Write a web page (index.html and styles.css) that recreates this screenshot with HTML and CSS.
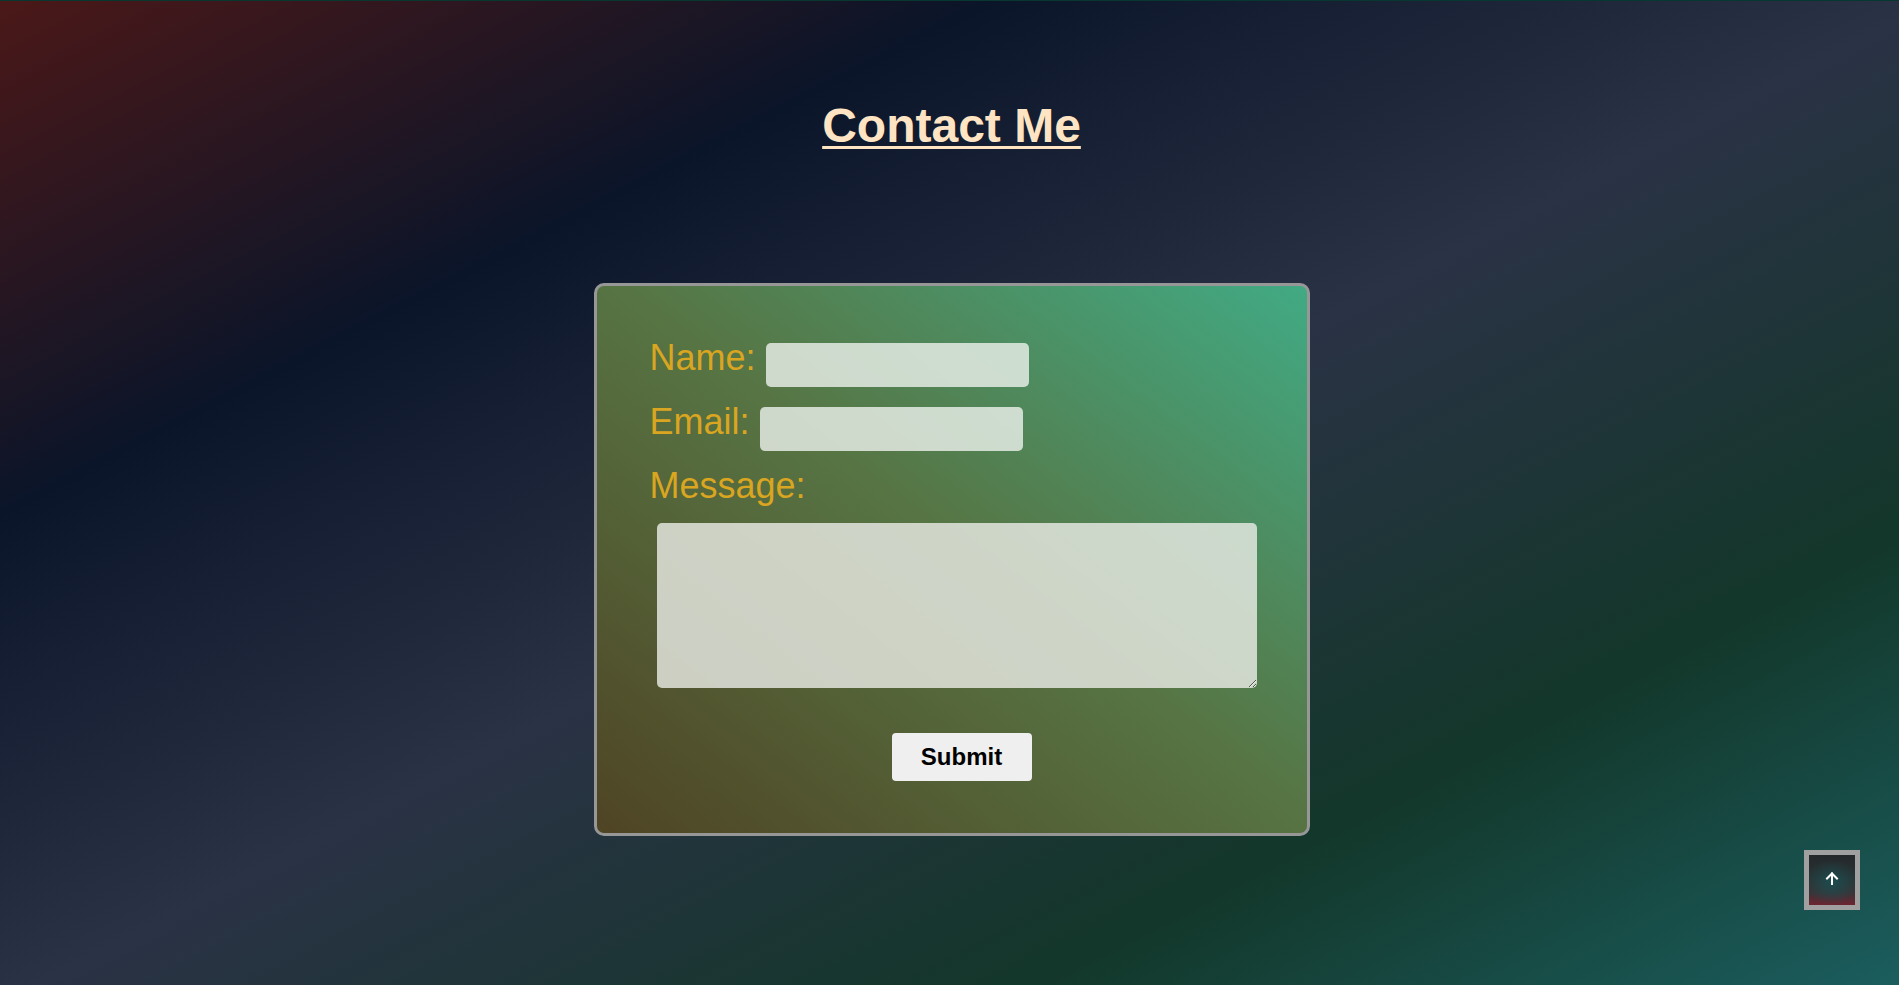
FILE: index.html
```html
<!DOCTYPE html>
<html lang="en">
<head>
<meta charset="utf-8">
<title>Contact Me</title>
<link rel="stylesheet" href="styles.css">
</head>
<body>
  <main class="page">
    <h1 class="title">Contact Me</h1>
    <form class="contact-card">
      <div class="row"><label for="name">Name:</label> <input class="field" type="text" id="name"></div>
      <div class="row"><label for="email">Email:</label> <input class="field" type="email" id="email"></div>
      <div class="row"><label for="message">Message:</label></div>
      <textarea class="message" id="message"></textarea>
      <div class="actions"><button class="submit" type="submit">Submit</button></div>
    </form>
  </main>
  <a class="to-top" href="#" aria-label="Back to top">
    <svg width="14" height="14" viewBox="0 0 14 14" fill="none" stroke="#fff" stroke-width="2" stroke-linecap="square">
      <path d="M7 13V2.5"/>
      <path d="M2 7.5L7 2.5L12 7.5"/>
    </svg>
  </a>
</body>
</html>
```
FILE: styles.css
```css
html, body {
  margin: 0;
  padding: 0;
}

body {
  min-height: 100vh;
  font-family: "Liberation Sans", Arial, sans-serif;
  background: linear-gradient(to bottom right,
    #4b1818 0%,
    #0b1529 26%,
    #2a3245 51%,
    #13372a 77%,
    #1b5d5e 100%);
  box-shadow: inset 0 1px 0 #08372f;
}

.page {
  display: flex;
  flex-direction: column;
  align-items: center;
  padding: 98px 0 0 4px;
}

.title {
  margin: 0;
  font-size: 48px;
  font-weight: bold;
  line-height: 55px;
  color: #ffe4c4;
  text-decoration: underline;
  text-decoration-thickness: 3px;
  text-underline-offset: 4px;
}

.contact-card {
  box-sizing: border-box;
  width: 716px;
  margin-top: 130px;
  padding: 40px 53px 52px;
  border: 3px solid #979797;
  border-radius: 10px;
  background: linear-gradient(to top right,
    #4f4424 0%,
    #577544 52%,
    #41aa84 100%);
}

.row {
  line-height: 64px;
  height: 64px;
  font-size: 36px;
  color: #daa520;
  white-space: nowrap;
}

.row label {
  font-size: 36px;
}

.field {
  box-sizing: border-box;
  width: 263px;
  height: 44px;
  padding: 0 8px;
  border: none;
  border-radius: 5px;
  font-family: "Liberation Sans", Arial, sans-serif;
  font-size: 16px;
  line-height: normal;
  vertical-align: baseline;
  background: rgba(238, 242, 238, 0.8);
  outline: none;
}

.message {
  display: block;
  box-sizing: border-box;
  width: 600px;
  height: 165px;
  margin: 5px 0 0 7px;
  padding: 4px;
  border: none;
  border-radius: 5px;
  font-family: "Liberation Sans", Arial, sans-serif;
  font-size: 16px;
  background: rgba(236, 238, 232, 0.8);
  outline: none;
}

.actions {
  display: flex;
  justify-content: center;
  padding-left: 20px;
  margin-top: 45px;
}

.submit {
  box-sizing: border-box;
  width: 140px;
  height: 48px;
  border: none;
  border-radius: 4px;
  background: #efefef;
  color: #000;
  font-family: "Liberation Sans", Arial, sans-serif;
  font-size: 24px;
  font-weight: bold;
  cursor: pointer;
}

.to-top {
  position: fixed;
  right: 39px;
  bottom: 75px;
  box-sizing: border-box;
  width: 56px;
  height: 60px;
  border: 5px solid #a0a0a0;
  display: flex;
  align-items: center;
  justify-content: center;
  padding-bottom: 4px;
  background:
    radial-gradient(ellipse 60% 45% at 50% 55%, rgba(28, 78, 80, 0.95), rgba(28, 78, 80, 0) 100%),
    linear-gradient(to bottom, #24282b 0%, #283234 45%, #3a3236 75%, #6c2531 100%);
}
```
